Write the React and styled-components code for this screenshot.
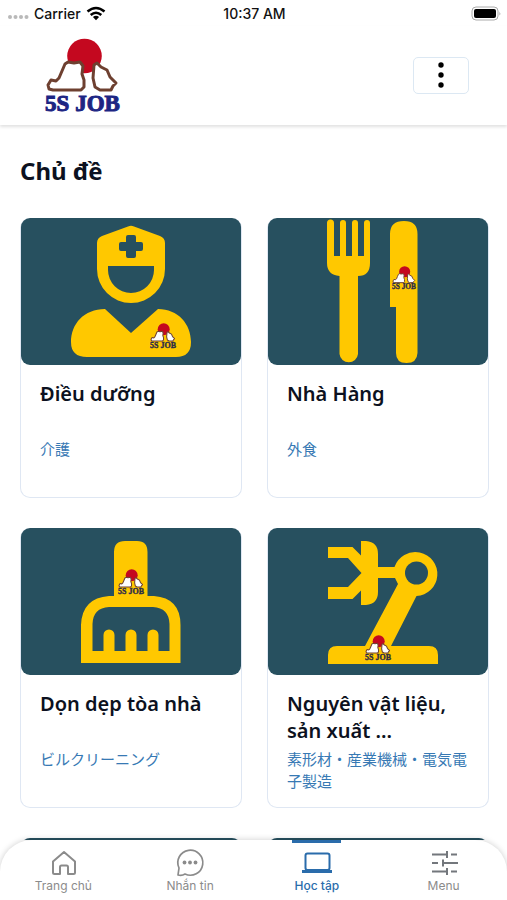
import React from 'react';
import styled, { createGlobalStyle } from 'styled-components';

const tekst = {
  heading: 'Chủ đề',
  carrier: 'Carrier',
  time: '10:37 AM',
};

const color = {
  teal: '#27505f',
  yellow: '#ffc800',
  blue: '#2a6cab',
  lightBlue: '#3779b4',
  grey: '#8b8b8b',
  ink: '#0c1120',
};

const GlobalStyle = createGlobalStyle`
  * {
    box-sizing: border-box;
  }

  body {
    margin: 0;
    background: #fff;
    color: ${color.ink};
    font-family: 'Noto Sans', 'Noto Sans CJK JP', sans-serif;
  }
`;

const Screen = styled.div`
  display: flex;
  flex-direction: column;
  height: 100vh;
`;

const StatusBar = styled.div`
  display: grid;
  grid-template-columns: 1fr auto 1fr;
  align-items: center;
  height: 26px;
  padding: 0 6px 0 8px;
  color: #111;
  font-family: Inter, sans-serif;
  font-size: 14px;
  font-weight: 500;
`;

const StatusSide = styled.div`
  display: flex;
  align-items: center;
  justify-content: ${(props) => (props.$end ? 'flex-end' : 'flex-start')};
  gap: 5px;
`;

const Header = styled.header`
  display: flex;
  align-items: center;
  justify-content: space-between;
  height: 99px;
  padding: 0 38px 0 45px;
  background: #fff;
  box-shadow: 0 2px 3px rgba(0, 0, 0, 0.12);
  z-index: 1;
`;

const LogoLink = styled.a`
  display: flex;
`;

const LogoSvg = styled.svg`
  overflow: visible;
`;

const MoreButton = styled.button`
  display: flex;
  justify-content: center;
  width: 56px;
  height: 37px;
  padding: 3px 0 0;
  border: 1px solid #dce8f3;
  border-radius: 5px;
  background: #fff;
`;

const Content = styled.main`
  flex: 1;
  min-height: 0;
  padding: 28px 18px 0 20px;
  overflow-y: auto;
  scrollbar-width: none;
`;

const Heading = styled.h1`
  margin: 0 0 29px;
  font-size: 24px;
  line-height: 36px;
`;

const CardGrid = styled.div`
  display: grid;
  grid-template-columns: 1fr 1fr;
  gap: 30px 25px;
`;

const CardBox = styled.article`
  min-height: 280px;
  border: 1px solid #dfe7f3;
  border-top: 0;
  border-radius: 10px;
`;

const CardImage = styled.svg`
  display: block;
  width: 100%;
  border-radius: 9px;
  background: ${color.teal};
`;

const CardBody = styled.div`
  padding: 15px 19px;
`;

const CardTitle = styled.h2`
  min-height: 54px;
  margin: 0 0 4px;
  font-size: 20px;
  font-weight: 600;
  line-height: 27px;
`;

const CardText = styled.p`
  min-height: 44px;
  margin: 0;
  color: ${color.lightBlue};
  font-size: 15px;
  line-height: 22px;
`;

const TabBar = styled.nav`
  display: grid;
  grid-template-columns: repeat(4, 1fr);
  height: 60px;
  border-radius: 32px 32px 0 0;
  background: #fff;
  box-shadow: 0 0 6px rgba(0, 0, 0, 0.2);
  z-index: 1;
`;

const Tab = styled.a`
  display: flex;
  flex-direction: column;
  align-items: center;
  color: ${(props) => (props.$active ? color.blue : color.grey)};
  font-family: Inter, sans-serif;
  font-size: 12px;
  font-weight: ${(props) => (props.$active ? 500 : 400)};
  line-height: 16px;
  text-decoration: none;

  &::before {
    content: '';
    width: 49px;
    height: 3px;
    margin-bottom: 5px;
    background: ${(props) => (props.$active ? color.blue : 'transparent')};
  }
`;

const TabIcon = styled.svg`
  width: 30px;
  height: 30px;
  fill: none;
  stroke: currentColor;
  stroke-width: 2;
`;

const Logo = ({ size, x, y, textColor = '#1c2583' }) => (
  <LogoSvg x={x} y={y} width={size} height={size} viewBox="0 0 75 75" role="img" aria-label="5S JOB">
    <circle cx="39.5" cy="18" r="17.3" fill="#c4081f" />
    <g fill="#fff" stroke="#6e4030" strokeWidth="3" strokeLinejoin="round">
      <path d="M4 51L3 47L6 42L11 43L14 40L17 33L20 26L23 24L29 25L35 24L38 28L37 36L39 42L39 49L36 52H8Z" />
      <path d="M49 27L52 25L56 29L62 32L65 39L71 45L68 48L66 52H55L50 49L48 40Z" />
    </g>
    <text
      x="37.5"
      y="73"
      textAnchor="middle"
      fontFamily="'Liberation Serif', serif"
      fontSize="23"
      fontWeight="700"
      fill={textColor}
      stroke={textColor}
      strokeWidth="1"
    >
      5S JOB
    </text>
  </LogoSvg>
);

const NursePicture = () => (
  <>
    <path
      fillRule="evenodd"
      d="M107 8.500Q110 7 113 8.500L139 18Q144 20 144 25V51A34 34 0 0 1 76 51V25Q76 20 81 18ZM87 48V52A23 23 0 0 0 133 52V48Z"
    />
    <path
      d="M107 17H113Q115 17 115 19V24H120Q122 24 122 26V31Q122 33 120 33H115V38Q115 40 113 40H107Q105 40 105 38V33H100Q98 33 98 31V26Q98 24 100 24H105V19Q105 17 107 17Z"
      fill={color.teal}
    />
    <path d="M84 91L110 115L137 91C157 91 170 106 170 124Q170 139 155 139H66Q50 139 50 124C50 106 63 91 84 91Z" />
    <Logo x="129" y="105" size="26" textColor="#2b2a4a" />
  </>
);

const RestaurantPicture = () => (
  <>
    <path d="M59 5a3.500 3.500 0 0 1 7 0V38H72V5a3 3 0 0 1 6 0V38H84V5a3 3 0 0 1 6 0V38H96V5a3 3 0 0 1 6 0V45Q102 58 90 58V136a9.300 9.300 0 0 1-18.500 0V58Q59 57 59 45Z" />
    <path d="M122 16Q122 3 136 3Q149.500 3 149.500 16V135Q149 145 138.500 145Q128 145 128 135V89H122Z" />
    <Logo x="124" y="48" size="24" textColor="#2b2a4a" />
  </>
);

const CleaningPicture = () => (
  <>
    <path
      fillRule="evenodd"
      d="M93 24Q93 13 104 13H116Q126.500 13 126.500 24V68H133Q159.500 70 159.500 97V135H60V97Q61 70 88 68H93ZM71.500 123H82.500V107a5.500 5.500 0 0 1 11 0V123H104.500V107a5.500 5.500 0 0 1 11 0V123H126.500V107a5.500 5.500 0 0 1 11 0V123H148.500V96Q148 80 132 79H88Q72 80 71.500 96Z"
    />
    <Logo x="97" y="41" size="26" textColor="#2b2a4a" />
  </>
);

const FactoryPicture = () => (
  <>
    <path d="M60 19H84.500L93 27.500V13H98Q110 14 110 26V39H126.500A22 22 0 1 1 148.500 68L123 118H161Q170 118 170 127V136H60V127Q60 118 69 118H97L130 56L127 50H110V64Q110 76 98 77H93V62.500L84.500 71H60V59H80L93.500 45L80 30H60Z" />
    <circle cx="148.500" cy="45" r="11.500" fill={color.teal} />
    <Logo x="97" y="107" size="26" textColor="#2b2a4a" />
  </>
);

const HomeIcon = () => (
  <TabIcon viewBox="0 0 30 30" aria-hidden="true">
    <path
      d="M5 24.500V13.500L16 4L27 13.500V24.500Q27 26 25.500 26H20V19Q20 17.500 18.500 17.500H13.500Q12 17.500 12 19V26H6.500Q5 26 5 24.500Z"
      strokeLinejoin="round"
    />
  </TabIcon>
);

const ChatIcon = () => (
  <TabIcon viewBox="0 0 30 30" aria-hidden="true">
    <path
      d="M3 27L4 20A12.500 12.500 0 1 1 10 26Q7 28 3 27Z"
      strokeWidth="1.700"
      strokeLinejoin="round"
    />
    <g fill="currentColor" stroke="none">
      <circle cx="9.500" cy="14.500" r="1.900" />
      <circle cx="15" cy="14.500" r="1.900" />
      <circle cx="20.500" cy="14.500" r="1.900" />
    </g>
  </TabIcon>
);

const LaptopIcon = () => (
  <TabIcon viewBox="0 0 30 30" aria-hidden="true">
    <rect x="3.500" y="5.500" width="24" height="16.500" rx="2" />
    <path d="M0 23.500H30" strokeWidth="3" />
  </TabIcon>
);

const SlidersIcon = () => (
  <TabIcon viewBox="0 0 30 30" aria-hidden="true">
    <g stroke="#73777c">
      <path d="M3 6.500H17M22 6.500H28M3 15H9M14 15H29M3 23.500H17M22 23.500H28" />
      <path d="M18 3V10M14 11.500V18.500M18 20V27" />
    </g>
  </TabIcon>
);

const cards = [
  { id: 'nurse', title: 'Điều dưỡng', text: '介護', Picture: NursePicture },
  { id: 'restaurant', title: 'Nhà Hàng', text: '外食', Picture: RestaurantPicture },
  { id: 'cleaning', title: 'Dọn dẹp tòa nhà', text: 'ビルクリーニング', Picture: CleaningPicture },
  {
    id: 'factory',
    title: 'Nguyên vật liệu, sản xuất ...',
    text: '素形材・産業機械・電気電子製造',
    Picture: FactoryPicture,
  },
  { id: 'next-left' },
  { id: 'next-right' },
];

const tabs = [
  { label: 'Trang chủ', Icon: HomeIcon },
  { label: 'Nhắn tin', Icon: ChatIcon },
  { label: 'Học tập', Icon: LaptopIcon, active: true },
  { label: 'Menu', Icon: SlidersIcon },
];

const Card = ({ title, text, Picture }) => (
  <CardBox>
    <CardImage viewBox="0 0 220 147" fill={color.yellow} aria-hidden="true">
      {Picture && <Picture />}
    </CardImage>
    {title && (
      <CardBody>
        <CardTitle>{title}</CardTitle>
        <CardText lang="ja">{text}</CardText>
      </CardBody>
    )}
  </CardBox>
);

const Status = () => (
  <StatusBar>
    <StatusSide>
      <svg width="21" height="14" fill="#b9b9b9" aria-hidden="true">
        <circle cx="2" cy="11" r="2" />
        <circle cx="7.500" cy="11" r="2" />
        <circle cx="13" cy="11" r="2" />
        <circle cx="18.500" cy="11" r="2" />
      </svg>
      <span>{tekst.carrier}</span>
      <svg width="20" height="15" viewBox="0 0 20 15" fill="none" stroke="#000" aria-hidden="true">
        <path d="M1.500 5.500Q10-1.500 18.500 5.500M4.700 9Q10 4.500 15.300 9" strokeWidth="2.600" />
        <path d="M6.900 11Q10 8.700 13.100 11L10 14.300Z" fill="#000" stroke="none" />
      </svg>
    </StatusSide>
    <span>{tekst.time}</span>
    <StatusSide $end>
      <svg width="30" height="15" viewBox="0 0 30 15" aria-hidden="true">
        <rect x="1" y="1" width="26" height="13" rx="4" fill="#fff" stroke="#aaa" />
        <rect x="3" y="3" width="22" height="9" rx="2" />
        <path d="M28.500 5.500Q30 7.500 28.500 9.500Z" fill="#999" />
      </svg>
    </StatusSide>
  </StatusBar>
);

const App = () => {
  return (
    <Screen>
      <GlobalStyle />
      <Status />
      <Header>
        <LogoLink href="#home">
          <Logo size="75" />
        </LogoLink>
        <MoreButton type="button" aria-label="Menu">
          <svg width="8" height="28" aria-hidden="true">
            <circle cx="4" cy="4" r="2.700" />
            <circle cx="4" cy="14" r="2.700" />
            <circle cx="4" cy="24" r="2.700" />
          </svg>
        </MoreButton>
      </Header>
      <Content>
        <Heading>{tekst.heading}</Heading>
        <CardGrid>
          {cards.map((card) => (
            <Card key={card.id} title={card.title} text={card.text} Picture={card.Picture} />
          ))}
        </CardGrid>
      </Content>
      <TabBar>
        {tabs.map(({ label, Icon, active }) => (
          <Tab key={label} href="#tab" $active={active} aria-current={active ? 'page' : undefined}>
            <Icon />
            <span>{label}</span>
          </Tab>
        ))}
      </TabBar>
    </Screen>
  );
};

export default App;
